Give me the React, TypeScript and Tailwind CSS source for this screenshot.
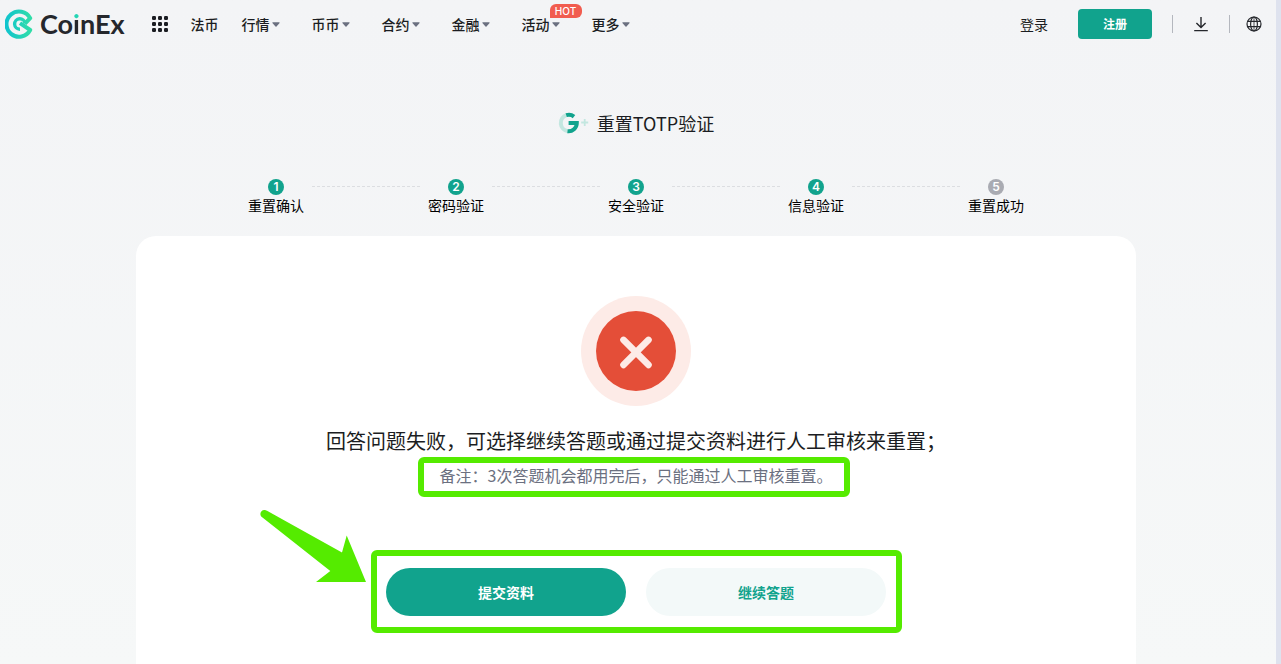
import { Fragment } from "react";
import type { ReactNode } from "react";
import { clsx } from "clsx";

const NAV_ITEMS = [
  { label: "行情" },
  { label: "币币" },
  { label: "合约" },
  { label: "金融" },
  { label: "活动", hot: true },
  { label: "更多" },
];

const STEPS = ["重置确认", "密码验证", "安全验证", "信息验证", "重置成功"];
const CURRENT_STEP = 4;

function LogoMark() {
  return (
    <svg width="29" height="30" viewBox="0 0 29 30" fill="none" aria-hidden="true">
      <defs>
        <linearGradient id="mark" x1="0" y1="0" x2="29" y2="0" gradientUnits="userSpaceOnUse">
          <stop stopColor="#0fc3cf" />
          <stop offset="1" stopColor="#35e0a4" />
        </linearGradient>
      </defs>
      <g stroke="url(#mark)" strokeWidth="4" strokeLinejoin="round">
        <path d="M20 14.5 L25.2 9.2 A12.6 12.6 0 1 0 25.2 21 L15 14.2" />
        <path d="M20 14.6 A5.2 5.2 0 1 0 15 20.2" strokeWidth="3.4" />
      </g>
    </svg>
  );
}

function Logo() {
  return (
    <a href="#" className="flex items-center gap-1.5" aria-label="CoinEx">
      <LogoMark />
      <span className="font-[Lato,sans-serif] text-[27px] leading-8 font-bold text-[#25272c]">
        Co
        <span className="bg-linear-to-b from-[#23d5b4] from-35% to-[#25272c] to-35% bg-clip-text text-transparent">
          i
        </span>
        nEx
      </span>
    </a>
  );
}

function AppsIcon() {
  return (
    <svg width="16" height="16" viewBox="0 0 16 16" fill="#1b1d22" aria-hidden="true">
      {[0, 6, 12].map((y) =>
        [0, 6, 12].map((x) => <rect key={`${x}-${y}`} x={x} y={y} width="4" height="4" rx="1.2" />)
      )}
    </svg>
  );
}

function Caret() {
  return (
    <svg width="8" height="5" viewBox="0 0 8 5" fill="#6b7080" aria-hidden="true">
      <path d="M1 .3h6c.6 0 .8.6.4 1L4.5 4.4a.7.7 0 0 1-1 0L.6 1.3C.2.9.4.3 1 .3Z" />
    </svg>
  );
}

function DownloadIcon() {
  return (
    <svg width="16" height="16" viewBox="0 0 16 16" fill="none" stroke="#25272c" strokeWidth="1.4" aria-hidden="true">
      <path d="M8 1v10.4M3.4 7 8 11.6 12.6 7M1.2 14.6h13.6" />
    </svg>
  );
}

function GlobeIcon() {
  return (
    <svg width="16" height="16" viewBox="0 0 16 16" fill="none" stroke="#25272c" strokeWidth="1.2" aria-hidden="true">
      <circle cx="8" cy="8" r="7" />
      <ellipse cx="8" cy="8" rx="3.4" ry="7" />
      <path d="M1.6 5.4h12.8M1.6 10.6h12.8" />
      <path d="M8 1v14" strokeWidth=".8" />
    </svg>
  );
}

function TotpIcon() {
  return (
    <svg width="31" height="22" viewBox="0 0 31 22" fill="none" aria-hidden="true">
      <path d="M8.5 3.1 A8.3 8.3 0 0 0 9.9 19.2" stroke="#c3e7e0" strokeWidth="4" />
      <path d="M8.2 3.2 A8.3 8.3 0 0 1 16 4.6" stroke="#11a38d" strokeWidth="4" />
      <path d="M10.6 11 H18.8 A8.3 8.3 0 0 1 9.5 19.2" stroke="#11a38d" strokeWidth="4" />
      <path d="M26.7 7v7M23.2 10.5h7" stroke="#c3e7e0" strokeWidth="1.8" />
    </svg>
  );
}

function ErrorIcon() {
  return (
    <svg width="110" height="110" viewBox="0 0 110 110" fill="none" aria-hidden="true">
      <circle cx="55" cy="55" r="55" fill="#fdebe7" />
      <circle cx="55" cy="55" r="40" fill="#e44e38" />
      <path d="M42.5 43.9l25 25M67.5 43.9l-25 25" stroke="#fdebe7" strokeWidth="6.6" strokeLinecap="round" />
    </svg>
  );
}

function Arrow({ className }: { className?: string }) {
  return (
    <svg className={className} width="106" height="73" viewBox="0 0 106 73" fill="#55eb00" aria-hidden="true">
      <path d="M1.2 7.5C-1 4.5 1.5.4 5 1L7 1.7 82 43.5 86.7 26.5 106 73H56L70.3 62Z" />
    </svg>
  );
}

function Header() {
  return (
    <header className="flex h-12 items-center pr-3.5 pl-[5px] text-sm text-[#1b1d22]">
      <Logo />
      <button type="button" className="ml-[27px]" aria-label="产品">
        <AppsIcon />
      </button>
      <nav className="ml-[23px] flex items-center font-medium">
        <a href="#" className="mr-[23px]">法币</a>
        <div className="flex items-center gap-8">
          {NAV_ITEMS.map((item) => (
            <a key={item.label} href="#" className="relative flex items-center gap-0.5">
              {item.label}
              <Caret />
              {item.hot && (
                <span className="absolute -top-2.5 left-7 h-3.5 w-8 rounded-t-md rounded-br-md bg-[#f15c4f] text-center font-[Inter,sans-serif] text-[10px] leading-3.5 font-medium text-white">
                  HOT
                </span>
              )}
            </a>
          ))}
        </div>
      </nav>
      <div className="ml-auto flex items-center">
        <a href="#">登录</a>
        <button type="button" className="ml-[30px] h-[30px] w-[74px] rounded-sm bg-[#11a38d] text-xs font-bold text-white">
          注册
        </button>
        <span className="ml-5 h-[18px] w-px bg-[#b4b7be]" />
        <button type="button" className="ml-5" aria-label="下载">
          <DownloadIcon />
        </button>
        <span className="ml-5 h-[18px] w-px bg-[#b4b7be]" />
        <button type="button" className="ml-4" aria-label="语言">
          <GlobeIcon />
        </button>
      </div>
    </header>
  );
}

function Steps() {
  return (
    <ol className="mx-auto flex w-full max-w-[792px]">
      {STEPS.map((label, i) => (
        <Fragment key={label}>
          {i > 0 && <li aria-hidden="true" className="mt-[7px] flex-1 border-t border-dashed border-[#dcdee1]" />}
          <li className="flex w-[72px] flex-col items-center text-sm text-black">
            <span
              className={clsx(
                "flex size-4 items-center justify-center rounded-full font-[Inter,sans-serif] text-xs font-semibold text-white",
                i < CURRENT_STEP ? "bg-[#11a38d]" : "bg-[#a9abb2]"
              )}
            >
              {i + 1}
            </span>
            {label}
          </li>
        </Fragment>
      ))}
    </ol>
  );
}

function Highlight({ className, children }: { className?: string; children?: ReactNode }) {
  return (
    <div className={clsx("pointer-events-none absolute rounded-md border-6 border-[#55eb00]", className)}>
      {children}
    </div>
  );
}

function ResultCard() {
  return (
    <section className="mx-auto flex w-full max-w-[1000px] flex-1 flex-col items-center rounded-t-[20px] bg-white pt-[60px] pb-12">
      <ErrorIcon />
      <h2 className="mt-[21px] text-xl leading-7 text-[#1b1d22]">
        回答问题失败，可选择继续答题或通过提交资料进行人工审核来重置；
      </h2>
      <div className="relative mt-2">
        <p className="leading-6 text-[#6b7080]">备注：3次答题机会都用完后，只能通过人工审核重置。</p>
        <Highlight className="-top-1.5 -right-[18px] -bottom-2.5 -left-[22px]" />
      </div>
      <div className="relative mt-[81px] flex gap-5 text-sm font-bold">
        <button type="button" className="h-12 w-60 rounded-full bg-[#11a38d] text-white">
          提交资料
        </button>
        <button type="button" className="h-12 w-60 rounded-full bg-[#f3f9f9] text-[#11a38d]">
          继续答题
        </button>
        <Highlight className="-top-[18px] -right-4 -bottom-[17px] -left-[15px]">
          <Arrow className="absolute -top-[47px] right-full mr-[11px]" />
        </Highlight>
      </div>
    </section>
  );
}

export default function App() {
  return (
    <div className="flex min-h-screen bg-[#dee2ee] font-['Noto_Sans_CJK_SC',sans-serif]">
      <div className="flex flex-1 flex-col bg-linear-to-b from-[#f3f4f6] to-[#f6f8f8]">
        <Header />
        <main className="flex flex-1 flex-col pr-1">
          <h1 className="mt-[61px] flex items-center justify-center gap-2 text-lg leading-7 text-[#1b1d22]">
            <TotpIcon />
            重置TOTP验证
          </h1>
          <div className="mt-[42px] mb-[21px]">
            <Steps />
          </div>
          <ResultCard />
        </main>
      </div>
      <div className="w-[5px]" />
    </div>
  );
}
